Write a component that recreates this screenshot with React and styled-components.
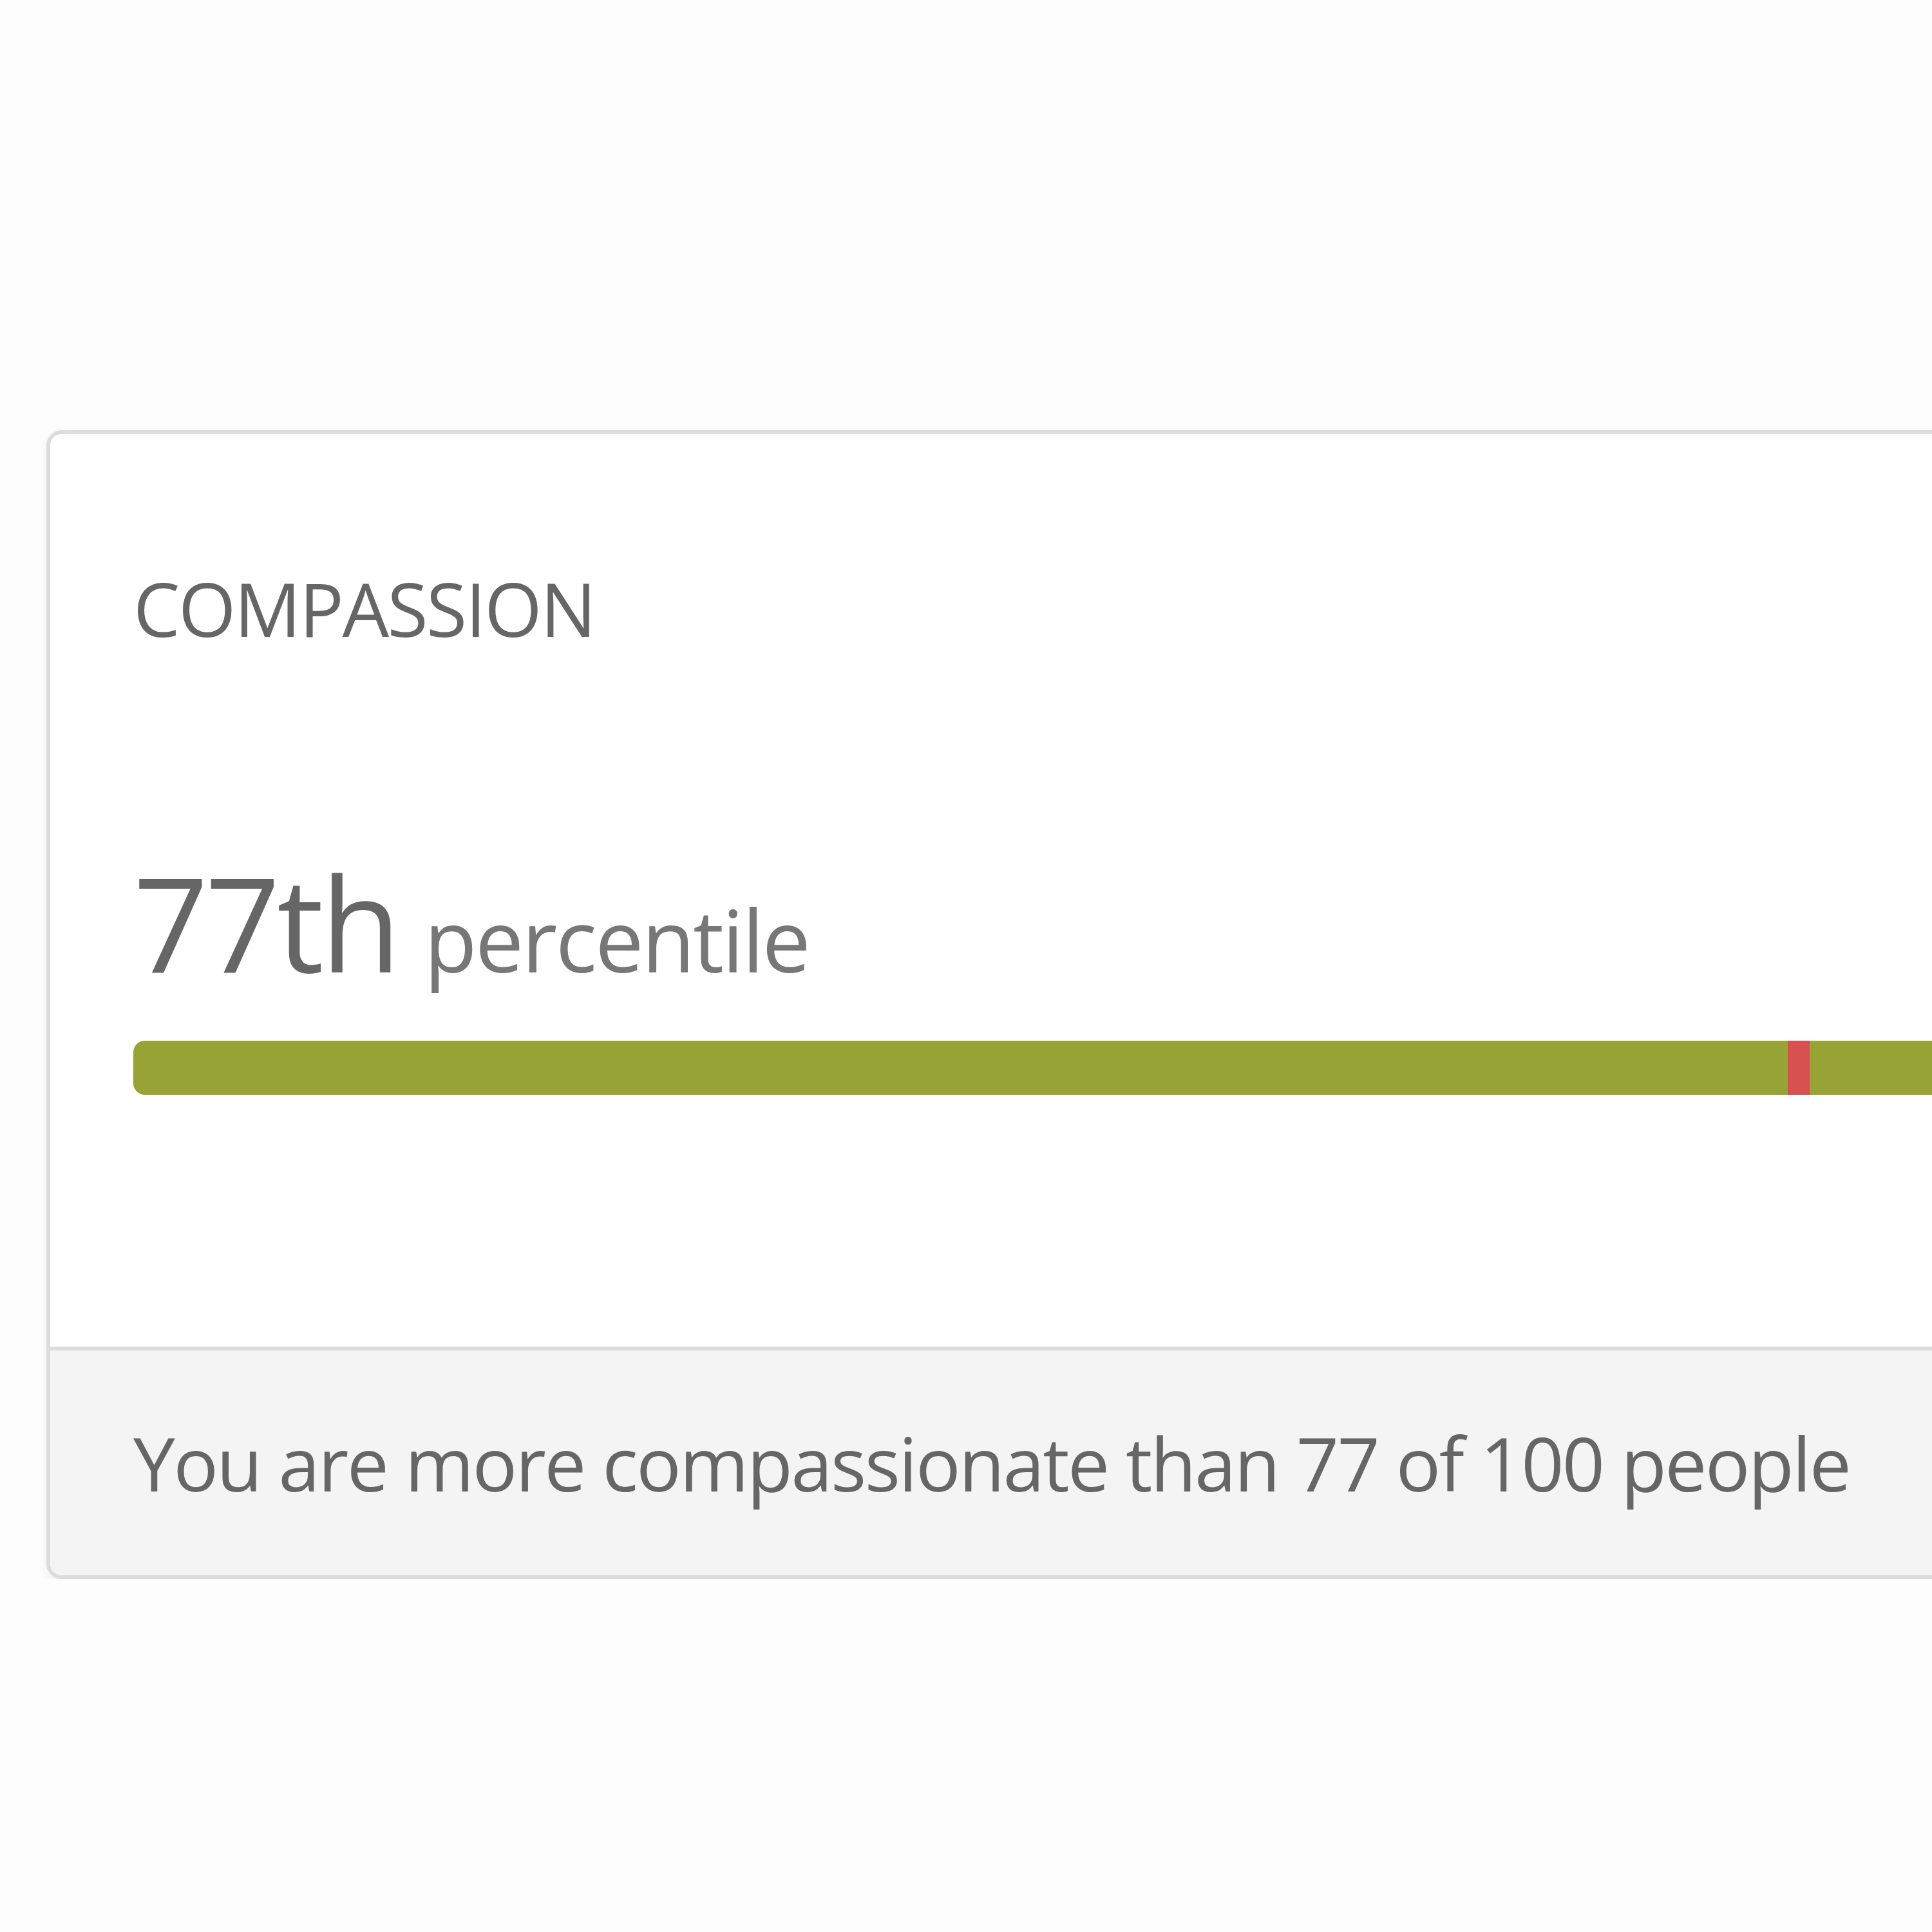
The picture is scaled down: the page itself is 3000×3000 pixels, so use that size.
import React from 'react'
import styled, { createGlobalStyle } from 'styled-components'

const GlobalStyle = createGlobalStyle`
  html, body {
    margin: 0;
    padding: 0;
    overflow: hidden;
    background: #fdfdfd;
  }
  body {
    font-family: 'Open Sans', 'Noto Sans', sans-serif;
    color: #666;
  }
`

const trait = {
  name: 'COMPASSION',
  adjective: 'compassionate',
  percentile: 77,
}

const ordinal = (n) => {
  const rem = n % 100
  if (rem >= 11 && rem <= 13) return `${n}th`
  return `${n}${['th', 'st', 'nd', 'rd'][n % 10] || 'th'}`
}

const TraitCard = ({ data }) => (
  <Card>
    <Body>
      <Title>{data.name}</Title>
      <Score>
        <Rank>{ordinal(data.percentile)}</Rank>
        <Unit>percentile</Unit>
      </Score>
      <Track>
        <Marker style={{ left: `${data.percentile}%` }} />
      </Track>
    </Body>
    <Footer>
      You are more {data.adjective} than {data.percentile} of 100 people
    </Footer>
  </Card>
)

const App = () => (
  <>
    <GlobalStyle />
    <Page>
      <TraitCard data={trait} />
    </Page>
  </>
)

const Page = styled.div`
  padding: 668px 0 0 72px;
`

const Card = styled.section`
  width: 3594px;
  background: #fff;
  border: 6px solid #dcdcdc;
  border-radius: 24px;
  overflow: hidden;
  box-shadow: 0 6px 16px rgba(0, 0, 0, 0.06);
`

const Body = styled.div`
  display: flex;
  flex-direction: column;
  padding: 213px 129px 391px;
`

const Title = styled.h3`
  margin: 0;
  font-size: 115px;
  line-height: 1;
  font-weight: 400;
  letter-spacing: -0.022em;
  color: #666;
`

const Score = styled.div`
  display: flex;
  align-items: baseline;
  gap: 41px;
  margin-top: 327px;
`

const Rank = styled.span`
  font-size: 204px;
  line-height: 1;
  letter-spacing: -0.025em;
  color: #666;
`

const Unit = styled.span`
  font-size: 134px;
  line-height: 1;
  letter-spacing: -0.02em;
  color: #777;
`

const Track = styled.div`
  position: relative;
  height: 84px;
  margin-top: 83px;
  border-radius: 18px;
  background: #98a336;
`

const Marker = styled.span`
  position: absolute;
  top: 0;
  bottom: 0;
  width: 34px;
  background: #d85050;
`

const Footer = styled.div`
  padding: 116px 129px 117px;
  border-top: 6px solid #dcdcdc;
  background: #f4f4f4;
  font-size: 116px;
  line-height: 1;
  letter-spacing: -0.023em;
  color: #666;
`

export default App
